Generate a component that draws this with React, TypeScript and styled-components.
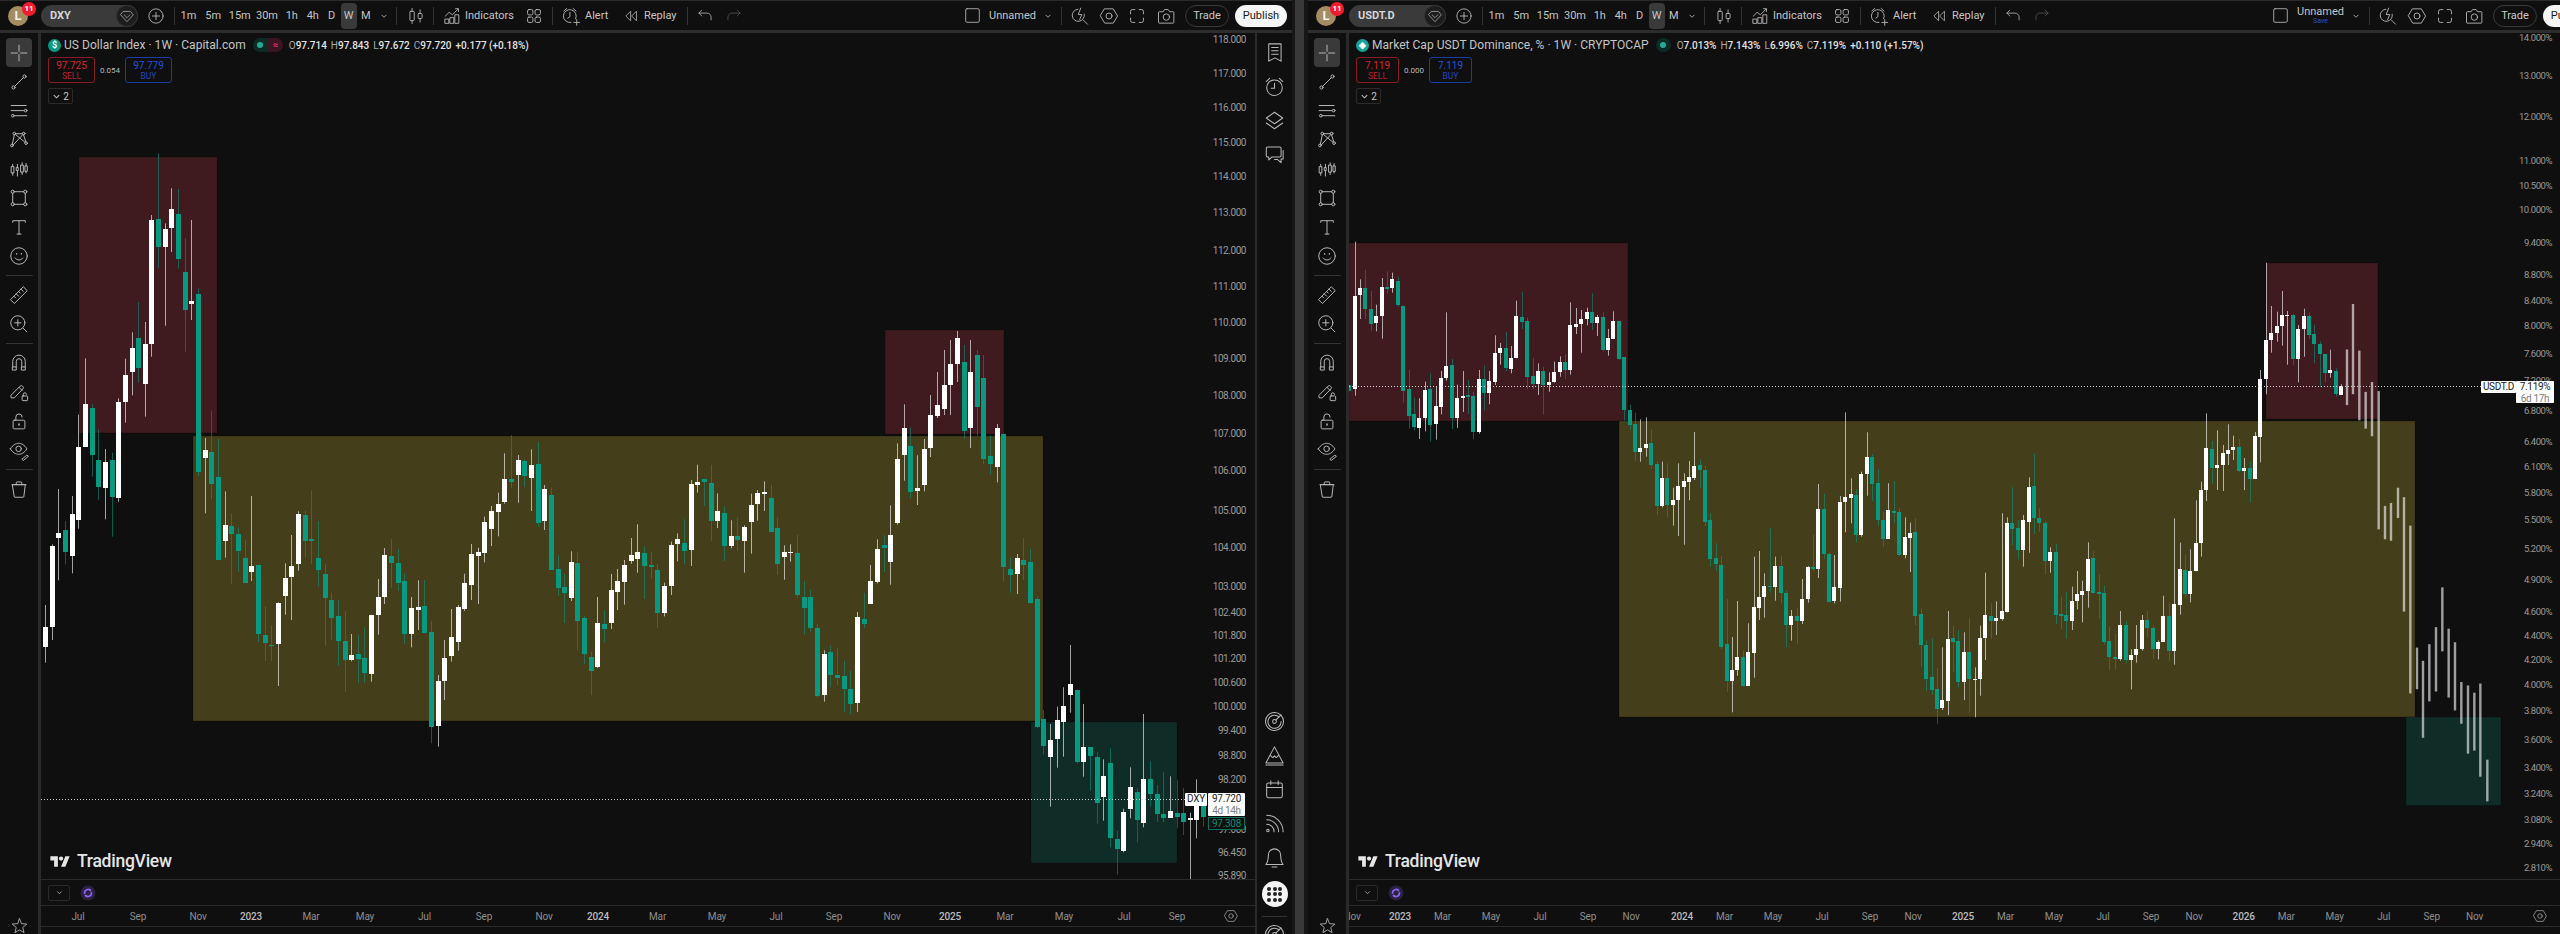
import React from "react";
import styled, { createGlobalStyle } from "styled-components";

const FONT = `Roboto, "Liberation Sans", Arial, sans-serif`;
const BG = "#0f0f0f";
const LINE = "#2a2a2a";

type C = { up: boolean; h: number; o: number; c: number; l: number };
const rows = (base: number, scale: number, s: string): C[] =>
  s.trim().split("\n").map((ln) => {
    const [t, a, b, c, d] = ln.trim().split(/\s+/);
    return { up: t === "u", h: base + +a / scale, o: base + +b / scale, c: base + +c / scale, l: base + +d / scale };
  });

const leftCandles: C[] = [
  ...rows(400, 3, `u 615 682 740 788
u 433 438 680 720
u 267 398 413 541
d 363 391 456 493
u 288 343 468 520
u 44 140 360 386`),
  ...rows(120, 3, `u 715 853 981 981
d 853 863 1005 1070
d 928 1021 1100 1140
u 987 1025 1105 1198
d 998 1021 1131 1250
u 835 845 1133 1145
u 716 765 846 908
u 637 683 757 826
d 547 655 745 788
u 606 671 791 890
u 285 300 672 710
d 100 296 380 443
u 310 326 382 617
u 205 268 323 396
d 207 283 418 446
d 355 457 570 695
u 300 543 551 600
d 505 522 1056 1068`),
  ...rows(400, 3, `u 114 151 173 340
d 32 156 253 298
d 117 232 479 479
u 274 375 424 473
d 340 377 403 551
d 382 403 452 515
d 420 474 548 548
u 288 498 516 543
d 496 496 703 726
d 619 706 728 783
d 676 734 738 783
u 607 608 733 858
u 490 533 589 644
u 405 497 532 660
u 334 343 492 512
d 332 346 424 474
d 272 418 422 493
d 363 474 509 558
d 492 522 593 737
d 578 599 653 720
d 599 648 723 797
d 633 723 781 877
u 702 766 779 784
d 704 762 776 850
d 682 773 818 848
u 644 645 822 845
u 537 590 646 704
u 444 465 591 612
d 417 467 490 563
d 447 490 550 573
d 521 542 701 731
u 591 625 701 742
u 541 622 631 690
d 540 618 700 700
d 663 695 980 1030
u 825 842 977 1040
u 720 773 843 900
u 627 712 767 785
u 615 622 726 752
u 521 549 628 632
u 432 462 555 600
u 443 455 468 612
u 350 366 459 487
u 318 334 388 438
u 278 311 335 409
u 160 236 306 311
d 105 238 246 263
u 165 179 224 308
d 178 183 228 262
u 148 195 235 333
d 126 193 368 380
u 255 268 363 390
d 263 286 510 510
d 466 506 564 587
d 521 562 580 669
u 454 487 594 603
d 457 490 664 751
d 648 654 763 792
d 755 771 813 886
u 591 670 801 804
d 630 672 686 726
u 522 569 669 687
u 507 544 575 630
u 480 494 545 614
u 414 464 482 491
u 373 455 477 518
d 438 460 497 597
d 455 494 502 535
d 493 511 639 685
u 548 558 639 649
u 425 435 557 585
u 400 418 433 484
d 358 430 452 493
u 240 252 449 498
u 194 247 254 278
d 237 238 246 318
d 194 250 362 423
u 280 332 362 384
d 318 339 438 483
u 361 407 439 445
d 354 409 420 453
u 376 380 422 518
u 281 316 365 461
u 270 280 312 362
u 244 277 281 333
d 254 295 395 396
d 354 385 491 525
u 436 455 470 539
u 433 457 458 485
d 405 460 586 594
d 543 592 623 703
d 570 590 683 695
d 672 684 888 892
u 751 761 886 905
d 737 757 824 862
d 743 825 834 856
d 782 828 866 937
d 813 867 911 942
u 636 652 909 936
d 578 657 671 685
u 495 544 612 612
u 418 448 546 550
d 406 434 443 516
u 316 405 486 554
u 130 177 370 374
u 13 85 165 242
d 82 138 275 294
u 166 265 274 315
u 117 147 255 274`),
  ...rows(0, 1, `u 395 415 448 457
u 372 405 416 418
u 350 385 409 415
u 340 364 385 415
u 331 338 364 382
d 345 362 431 439
u 340 372 428 448
d 350 355 407 436
d 355 378 459 464`),
  ...rows(400, 3, `d 106 167 192 222
u 72 85 202 247
d 100 103 500 545
d 473 508 525 578
u 462 474 521 582
d 414 481 494 540
d 446 485 610 610
d 590 598 982 985`),
  ...rows(640, 3, `d 210 238 319 343
u 252 300 352 500
u 200 240 298 383
u 142 198 246 350
u 15 132 166 218
d 148 149 365 370
u 192 320 365 410
d 322 322 349 452
d 335 351 488 552
u 358 407 472 542
d 325 370 593 622
d 572 598 626 703
u 506 516 633 637
u 382 441 507 535
d 445 455 541 607
u 222 416 550 562
d 364 416 461 500
d 435 462 522 546
d 396 521 535 547
u 409 512 534 534
d 420 519 532 565
d 444 520 545 585
u 518 535 541 718
u 418 460 539 595
d 480 497 530 560`),
];

const rightCandles: C[] = [
  ...rows(230, 3, `d 464 465 482 482
u 35 197 478 497
u 148 175 196 267
d 120 175 236 267
d 183 236 281 302
u 224 259 280 304
u 144 172 257 326
d 124 171 176 190
u 128 147 173 188
d 140 152 226 230
d 226 227 482 518
d 420 478 557 596
d 503 553 591 601
u 505 563 594 627
u 455 480 564 604
d 430 478 584 635
u 470 529 582 629
u 423 444 532 553
u 247 409 445 452
d 387 405 564 597
u 464 503 564 594
u 423 498 505 546
d 450 496 502 552
d 485 498 607 628
u 420 448 607 611
d 407 446 488 542
u 423 453 488 523
u 316 368 455 465
u 339 354 370 404
d 306 355 413 423
u 348 385 416 430
u 212 259 385 385
d 187 261 275 297
d 262 272 440 478
d 384 439 462 478
u 400 423 462 495
d 410 423 465 553
u 427 456 465 485
u 395 426 455 458
u 379 396 427 440
d 373 396 420 448
u 217 286 420 434
u 234 281 291 312
u 240 266 283 368
u 233 247 267 286
d 190 247 278 300
u 255 261 278 318
d 247 261 359 364
u 297 325 359 377
u 244 272 326 326
d 272 273 386 390
d 382 382 540 572
d 524 540 585 600
d 548 583 666 693
u 568 654 665 695
u 562 643 655 680
d 599 640 705 716
d 694 702 827 855
u 695 745 827 832
d 700 745 825 863
u 773 810 825 887
u 700 769 811 918
u 730 752 770 944
u 693 741 755 811
u 606 707 743 750
d 688 706 720 775
d 707 721 875 888
d 850 871 987 1010
d 940 985 1003 1023
d 977 1004 1250 1258
d 1107 1243 1352 1385
u 1221 1319 1352 1447
u 1113 1280 1321 1337
d 1261 1281 1368 1370
u 1180 1266 1367 1367
u 980 1132 1268 1343
u 963 1100 1133 1170
u 1030 1068 1101 1163
d 895 1068 1072 1088
u 980 1008 1072 1112
d 978 1008 1090 1120
d 1082 1088 1184 1252
u 1140 1159 1184 1232
d 1133 1159 1173 1241
u 1047 1107 1172 1182
u 1008 1011 1107 1118
d 915 1012 1018 1024
u 762 837 1017 1044
d 792 837 973 988
d 968 972 1115 1118
u 975 1072 1113 1120
u 798 817 1073 1115
u 547 800 815 907
u 745 793 804 880
d 778 795 915 937
u 725 732 914 920
u 607 682 733 797
d 673 682 761 813
d 718 760 870 888
d 846 869 926 950
u 760 841 926 926
d 753 842 848 880
d 835 846 975 978
u 862 922 974 985
u 878 908 923 1026
d 865 907 1157 1185
d 1136 1153 1245 1310
d 1232 1244 1347 1383
d 1225 1342 1380 1395
d 1315 1377 1437 1482
u 1252 1411 1435 1440
u 1143 1226 1412 1455
d 1187 1225 1237 1325
d 1200 1234 1357 1372
u 1207 1267 1357 1410
d 1164 1267 1348 1447
u 1312 1347 1349 1462
u 1187 1224 1348 1397
u 1028 1155 1225 1290
d 1120 1157 1173 1226
u 1114 1163 1172 1215
u 850 1143 1168 1172
u 862 878 1147 1147
d 772 879 896 945
d 870 894 960 988
u 855 871 960 1010
u 742 771 875 968
d 672 769 863 911
d 835 865 880 905
d 873 880 994 1033
u 952 965 992 1028
d 942 965 1155 1182
d 1100 1153 1158 1197
d 1087 1155 1172 1227
u 1070 1112 1172 1200
u 1023 1093 1113 1138
u 1052 1082 1094 1177
u 937 986 1083 1133
d 963 984 1088 1090
d 1033 1087 1092 1165
d 1067 1090 1235 1243
d 1190 1233 1282 1320
d 1210 1281 1286 1320
u 1143 1185 1286 1292
d 1173 1186 1290 1300
u 1258 1274 1290 1378
u 1185 1256 1274 1298
u 1155 1171 1256 1262
d 1143 1171 1194 1222
d 1187 1195 1256 1286
u 1232 1235 1256 1288
u 1097 1157 1236 1236
d 1117 1158 1262 1294
u 865 1123 1263 1304
u 938 1016 1124 1154
d 972 1020 1092 1102
u 958 1022 1092 1117
u 811 938 1022 1024
u 755 781 938 980
u 550 655 781 813
d 633 657 715 761
u 601 705 715 780
u 645 670 705 783
u 583 659 671 705
u 617 650 660 690
d 627 650 723 727
u 684 713 722 780
d 696 714 747 818
u 606 618 747 747
u 420 447 621 697
u 98 330 447 493
u 228 310 331 368
u 245 287 310 335
u 183 255 287 347
u 243 255 258 404
d 252 254 388 406
u 285 298 388 457
u 236 259 296 380
d 248 259 315 327
d 284 312 342 400
d 334 342 371 472
d 372 372 429 457
u 359 421 429 443
d 415 422 493 500`),
  ...rows(340, 2.64, `u 117 122 145 145`),
];

// projected bars on the right chart: [x in zoom, top, bottom]
const ghost: [number, number, number][] = [
  [441, 25, 172], [459, -95, 143], [478, 28, 212], [497, 137, 234], [516, 111, 254], [536, 135, 500],
  [555, 438, 526], [573, 430, 530], [594, 390, 470], [612, 415, 717], [631, 490, 933], [651, 812, 922],
  [669, 847, 1050], [688, 803, 954], [708, 758, 928], [727, 653, 822], [746, 762, 944], [765, 798, 978],
  [784, 903, 1013], [804, 912, 1092], [823, 931, 1084], [841, 907, 1153], [862, 1108, 1218],
];

type Zone = { x: number; y: number; x2: number; y2: number; fill: string };
const RED = "#3f1a1f", OLIVE = "#453e1b", TEAL = "#102c27";

const GlobalStyle = createGlobalStyle`
  html, body { margin: 0; padding: 0; background: ${BG}; overflow: hidden; }
  body { font-family: ${FONT}; }
  #root { width: 2560px; height: 934px; }
`;

const Page = styled.div`
  display: flex;
  width: 2560px;
  height: 934px;
  background: ${BG};
  color: #c8c8c8;
  font-family: ${FONT};
`;
const Pane = styled.section<{ $w: number }>`
  display: flex;
  flex-direction: column;
  width: ${(p) => p.$w}px;
  height: 100%;
  overflow: hidden;
  flex: none;
`;
const Gutter = styled.div`
  width: 16px;
  flex: none;
  background: #393939;
  border-left: 3px solid #171717;
  border-right: 4px solid #171717;
  box-sizing: border-box;
`;
const TopBar = styled.header`
  display: flex;
  align-items: center;
  width: 1292px;
  height: 30px;
  flex: none;
  box-sizing: border-box;
  border-top: 1px solid ${LINE};
  padding-right: 5px;
  background: ${BG};
`;
const Band = styled.div`
  height: 3px;
  flex: none;
  background: #2d2d2d;
`;
const Body = styled.div`
  display: flex;
  flex: 1;
  min-height: 0;
`;
const Avatar = styled.div`
  position: relative;
  width: 20px;
  height: 20px;
  margin-left: 8px;
  flex: none;
  border-radius: 50%;
  background: #a58c63;
  color: #f4f1ea;
  font-size: 13px;
  font-weight: 700;
  display: flex;
  align-items: center;
  justify-content: center;
`;
const Badge = styled.span`
  position: absolute;
  top: -4px;
  right: -8px;
  width: 14px;
  height: 14px;
  border-radius: 50%;
  background: #f01c2d;
  color: #fff;
  font-size: 8px;
  font-weight: 700;
  display: flex;
  align-items: center;
  justify-content: center;
`;
const SymbolPill = styled.div`
  display: flex;
  align-items: center;
  justify-content: space-between;
  width: 97px;
  height: 22px;
  margin-left: 13px;
  flex: none;
  border-radius: 11px;
  background: #3a3a3a;
  font-size: 11px;
  font-weight: 700;
  color: #d6d6d6;
  padding-left: 9px;
  box-sizing: border-box;
`;
const PillIcon = styled.span`
  width: 22px;
  height: 22px;
  border-radius: 50%;
  background: #1d1d1d;
  border: 1px solid #333;
  box-sizing: border-box;
  display: flex;
  align-items: center;
  justify-content: center;
`;
const IconBox = styled.span<{ $ml?: number; $w?: number }>`
  display: inline-flex;
  align-items: center;
  justify-content: center;
  width: ${(p) => p.$w ?? 20}px;
  height: 20px;
  margin-left: ${(p) => p.$ml ?? 0}px;
  flex: none;
`;
const VLine = styled.span<{ $ml: number }>`
  width: 1px;
  height: 18px;
  margin-left: ${(p) => p.$ml}px;
  background: #333;
  flex: none;
`;
const Interval = styled.span<{ $w: number; $on?: boolean }>`
  position: relative;
  width: ${(p) => p.$w}px;
  height: 26px;
  flex: none;
  display: flex;
  align-items: center;
  justify-content: center;
  font-size: 11px;
  color: #c4c4c4;
  border-radius: 4px;
  background: ${(p) => (p.$on ? "#3a3a3a" : "transparent")};
`;
const BarText = styled.span<{ $ml: number; $w: number }>`
  width: ${(p) => p.$w}px;
  margin-left: ${(p) => p.$ml}px;
  font-size: 11px;
  color: #c4c4c4;
  white-space: nowrap;
  flex: none;
`;
const Spacer = styled.span`
  flex: 1;
`;
const LayoutName = styled.span`
  width: 45px;
  margin-left: 8px;
  flex: none;
  display: flex;
  flex-direction: column;
  align-items: center;
  font-size: 11px;
  line-height: 11px;
  color: #c4c4c4;
  & > small {
    font-size: 7px;
    line-height: 8px;
    color: #2a4fd8;
  }
`;
const TradeButton = styled.span`
  width: 44px;
  height: 22px;
  margin-left: 9px;
  flex: none;
  box-sizing: border-box;
  border: 1px solid #3a3a3a;
  border-radius: 11px;
  display: flex;
  align-items: center;
  justify-content: center;
  font-size: 11px;
  color: #c8c8c8;
`;
const PublishButton = styled.span`
  width: 52px;
  height: 22px;
  margin-left: 6px;
  flex: none;
  border-radius: 11px;
  background: #f5f5f5;
  color: #1a1a1a;
  display: flex;
  align-items: center;
  justify-content: center;
  font-size: 11px;
`;
const LeftTools = styled.nav`
  width: 41px;
  flex: none;
  box-sizing: border-box;
  border-right: 3px solid ${LINE};
  padding-top: 5px;
  display: flex;
  flex-direction: column;
  align-items: center;
`;
const Tool = styled.span<{ $on?: boolean }>`
  width: 26px;
  height: 29px;
  flex: none;
  display: flex;
  align-items: center;
  justify-content: center;
  border-radius: 4px;
  background: ${(p) => (p.$on ? "#3a3a3a" : "transparent")};
`;
const ToolRule = styled.span`
  width: 27px;
  height: 1px;
  margin: 4.5px 0 4.5px;
  background: #333;
  flex: none;
`;
const BottomTool = styled.span`
  margin-top: auto;
  margin-bottom: -1px;
  height: 20px;
  display: flex;
  align-items: center;
`;
const Main = styled.main`
  flex: 1;
  min-width: 0;
  display: grid;
  grid-template-rows: 846px 26px 22px 1fr;
`;
const ChartArea = styled.div`
  position: relative;
  overflow: hidden;
`;
const ChartSvg = styled.svg`
  position: absolute;
  inset: 0;
  display: block;
`;
const Legend = styled.div`
  position: absolute;
  left: 7px;
  top: 5px;
  display: flex;
  flex-direction: column;
  align-items: flex-start;
`;
const LegendRow = styled.div`
  display: flex;
  align-items: center;
  height: 14px;
  white-space: nowrap;
`;
const SymbolLogo = styled.span<{ $bg: string }>`
  width: 13px;
  height: 13px;
  border-radius: 50%;
  background: ${(p) => p.$bg};
  color: #fff;
  display: flex;
  align-items: center;
  justify-content: center;
  font-size: 9px;
  font-weight: 700;
  flex: none;
`;
const LegendTitle = styled.span`
  margin-left: 3px;
  font-size: 12px;
  letter-spacing: 0.03px;
  color: #c4c4c4;
`;
const StatusPill = styled.span`
  margin-left: 7px;
  height: 14px;
  display: flex;
  border-radius: 7px;
  overflow: hidden;
  flex: none;
`;
const StatusCell = styled.span<{ $bg: string; $fg: string }>`
  width: 15px;
  display: flex;
  align-items: center;
  justify-content: center;
  background: ${(p) => p.$bg};
  color: ${(p) => p.$fg};
  font-size: 9px;
  font-weight: 700;
  & > i {
    width: 6px;
    height: 6px;
    border-radius: 50%;
    background: #22ab94;
  }
`;
const Ohlc = styled.span`
  margin-left: 6px;
  font-size: 10px;
  color: #aaa;
  display: flex;
  gap: 4px;
  & > span > b {
    font-weight: 500;
    color: #e2e2e2;
  }
`;
const TradeRow = styled.div`
  display: flex;
  align-items: center;
  margin-top: 5px;
`;
const TradeBox = styled.div<{ $c: string; $b: string; $w: number }>`
  width: ${(p) => p.$w}px;
  height: 26px;
  box-sizing: border-box;
  border: 1px solid ${(p) => p.$b};
  border-radius: 3px;
  color: ${(p) => p.$c};
  display: flex;
  flex-direction: column;
  align-items: center;
  justify-content: center;
  font-size: 10px;
  line-height: 11px;
  & > small {
    font-size: 8.5px;
    line-height: 10px;
    opacity: 0.85;
  }
`;
const Spread = styled.span`
  width: 30px;
  text-align: center;
  font-size: 8px;
  color: #b8b8b8;
`;
const Collapse = styled.div`
  margin-top: 5px;
  width: 25px;
  height: 16px;
  box-sizing: border-box;
  border: 1px solid #2a2a2a;
  border-radius: 2px;
  display: flex;
  align-items: center;
  justify-content: center;
  gap: 2px;
  font-size: 10px;
  color: #c8c8c8;
`;
const Watermark = styled.div`
  position: absolute;
  left: 8px;
  top: 818px;
  display: flex;
  align-items: center;
  gap: 6px;
  font-size: 17.5px;
  font-weight: 500;
  letter-spacing: -0.25px;
  color: #e6e6e6;
`;
const PriceAxis = styled.div`
  position: absolute;
  top: 0;
  bottom: 0;
  right: 0;
  width: 60px;
`;
const PriceTick = styled.span<{ $pr: number; $fs: number }>`
  position: absolute;
  right: ${(p) => p.$pr}px;
  transform: translateY(-50%);
  font-size: ${(p) => p.$fs}px;
  letter-spacing: -0.45px;
  color: #9a9a9a;
  white-space: nowrap;
`;
const TagBox = styled.div<{ $w: number }>`
  position: absolute;
  width: ${(p) => p.$w}px;
  box-sizing: border-box;
  background: #fff;
  border-radius: 1px;
  color: #222;
  font-size: 10px;
  letter-spacing: -0.3px;
  line-height: 12px;
  text-align: center;
  & > small {
    display: block;
    font-size: 10px;
    line-height: 11px;
    color: #7e7e7e;
  }
`;
const LastPriceBox = styled.div`
  position: absolute;
  width: 37px;
  height: 13px;
  box-sizing: border-box;
  background: ${BG};
  border: 1px solid #0b6e5d;
  color: #0d8a74;
  font-size: 10px;
  letter-spacing: -0.3px;
  line-height: 11px;
  text-align: center;
`;
const BottomRow = styled.div`
  display: flex;
  align-items: center;
  padding-left: 7px;
  border-top: 1px solid ${LINE};
`;
const SmallBtn = styled.span`
  width: 22px;
  height: 16px;
  box-sizing: border-box;
  border: 1px solid #2a2a2a;
  border-radius: 2px;
  display: flex;
  align-items: center;
  justify-content: center;
`;
const TimeAxis = styled.div`
  position: relative;
  overflow: hidden;
  border-top: 1px solid ${LINE};
  border-bottom: 1px solid ${LINE};
`;
const TimeTick = styled.span<{ $year: boolean }>`
  position: absolute;
  top: 50%;
  transform: translate(-50%, -50%);
  font-size: 10px;
  letter-spacing: -0.15px;
  font-weight: ${(p) => (p.$year ? 500 : 400)};
  color: ${(p) => (p.$year ? "#bdbdbd" : "#909090")};
`;
const AxisGear = styled.span`
  position: absolute;
  top: 50%;
  transform: translate(-50%, -50%);
  display: flex;
`;
const AxisFoot = styled.div``;
const RightTools = styled.aside`
  width: 37px;
  flex: none;
  box-sizing: border-box;
  border-left: 2px solid ${LINE};
  display: flex;
  flex-direction: column;
  align-items: center;
  padding-top: 2px;
  overflow: hidden;
`;
const SideTool = styled.span`
  width: 30px;
  height: 34px;
  flex: none;
  display: flex;
  align-items: center;
  justify-content: center;
`;
const SideGap = styled.span`
  height: 533px;
  flex: none;
`;
const AppsButton = styled.span`
  width: 26px;
  height: 26px;
  margin-top: 7px;
  flex: none;
  border-radius: 50%;
  background: #f5f5f5;
  display: grid;
  grid-template-columns: repeat(3, 4px);
  grid-auto-rows: 4px;
  gap: 1.5px;
  align-content: center;
  justify-content: center;
  & > i {
    background: #222;
    border-radius: 50%;
  }
`;
const SideRule = styled.span`
  width: 25px;
  height: 1px;
  margin-top: 9px;
  background: #333;
  flex: none;
`;
const SvgIcon = styled.svg<{ $dim?: boolean }>`
  display: block;
  fill: none;
  stroke: ${(p) => (p.$dim ? "#555" : "#b9b9b9")};
  stroke-width: 1.25;
  stroke-linecap: round;
  stroke-linejoin: round;
`;
const LoaderSvg = styled.svg`
  display: block;
  margin-left: 10px;
`;

const ICONS: Record<string, React.ReactNode> = {
  crosshair: <path d="M14 4v8M14 16v8M4 14h8M16 14h8" />,
  trend: (<><path d="M8.5 19.5 19.5 8.5" /><circle cx="7" cy="21" r="2" /><circle cx="21" cy="7" r="2" /></>),
  fib: (<><path d="M4 7h19M4 13.5h16M8.5 20H24" /><circle cx="22.5" cy="13.5" r="1.7" /><circle cx="6.2" cy="20" r="1.7" /></>),
  xabcd: (<><path d="M8 7.5 5.5 19.5M9.5 7 21.5 16.8M18.5 7.5 7 20M19.8 7.5 22.5 16" /><path d="M10 6h8" /><circle cx="8" cy="5.8" r="1.7" /><circle cx="20" cy="5.8" r="1.7" /><circle cx="5" cy="21" r="1.7" /><circle cx="23" cy="18" r="1.7" /></>),
  brush: (<><rect x="4.5" y="11" width="3" height="8" /><path d="M6 8v3M6 19v3" /><rect x="11" y="12" width="2" height="4" /><path d="M12 8v4M12 16v7" /><rect x="16.5" y="9" width="3" height="9" /><path d="M18 6v3M18 18v3" /><rect x="22" y="10" width="2.5" height="7" /><path d="M23 7v3M23 17v2" /></>),
  rect: (<><path d="M8 6h12M8 22h12M6 8v12M22 8v12" /><circle cx="6" cy="6" r="2" /><circle cx="22" cy="6" r="2" /><circle cx="6" cy="22" r="2" /><circle cx="22" cy="22" r="2" /></>),
  text: <path d="M6 8V6h16v2M14 6v17M11.5 23h5" />,
  smile: (<><circle cx="14" cy="14" r="10.5" /><path d="M9 16.5c2.5 3.5 7.5 3.5 10 0" /><path d="M11 11v.6M17 11v.6" strokeWidth="1.7" /></>),
  ruler: <path d="M3.5 19.5 19.5 3.5l5 5-16 16zM7.5 15.5l2 2M10.5 12.5l3 3M13.5 9.5l2 2M16.5 6.5l3 3" />,
  zoomin: (<><circle cx="12.5" cy="12.5" r="9" /><path d="M12.5 8.5v8M8.5 12.5h8M19.5 19.5l4.5 4.5" /></>),
  magnet: <path d="M6 19v-7a8 8 0 0 1 16 0v7M10.5 19v-7a3.5 3.5 0 0 1 7 0v7M6 19h4.5v4H6zM17.5 19H22v4h-4.5z" />,
  pencillock: (<><path d="M4 18 15.5 6.5a2 2 0 0 1 2.8 0l.7.7a2 2 0 0 1 0 2.8L8 21.5H4.5zM14 8l4 4" /><rect x="18" y="19" width="7" height="6" rx="1" /><path d="M19.5 19v-2a2 2 0 0 1 4 0" /></>),
  lock: (<><rect x="6.5" y="13" width="15" height="11" rx="1.5" /><path d="M10 13V9a4 4 0 0 1 8 0" /><path d="M14 18v1" strokeWidth="2" /></>),
  eye: (<><path d="M3 12.5C6 7.5 10 5.5 13.5 5.5s7.5 2 10.5 7c-3 5-7 7-10.5 7S6 17.5 3 12.5z" /><circle cx="13.5" cy="12.5" r="3.5" /><path d="M18 25.5l6-5 2 1.5-6 5z" /></>),
  trash: <path d="M6 8.5h16l-1.8 15a1 1 0 0 1-1 1H8.800a1 1 0 0 1-1-1zM5 8.5h18M10.5 8.5V6a1 1 0 0 1 1-1h5a1 1 0 0 1 1 1v2.500" />,
  star: <path d="M14 4l3 7.300 7.800.6-6 5 1.900 7.600L14 20.400 7.300 24.500l1.900-7.600-6-5 7.800-.6z" />,
  plus: (<><circle cx="14" cy="14" r="10" /><path d="M14 9v10M9 14h10" /></>),
  candle: (<><rect x="5.5" y="7.5" width="6" height="13" rx="1" /><path d="M8.5 3.5v4M8.5 20.5v4" /><rect x="17" y="10.5" width="5.5" height="7" rx="1" /><path d="M19.7 5.5v5M19.7 17.5v5" /></>),
  indicators: (<><path d="M4.5 15 10 9.5l4.5 3.500 8-8" /><path d="M19 4.5h4v4" /><rect x="4.5" y="19" width="5" height="6" /><rect x="11.5" y="17" width="5" height="8" /><rect x="18.5" y="13" width="5" height="12" /></>),
  grid: (<><rect x="5" y="5" width="7.5" height="7.5" rx="2" /><rect x="15.5" y="5" width="7.5" height="7.5" rx="2" /><rect x="5" y="15.5" width="7.5" height="7.5" rx="2" /><rect x="15.5" y="15.5" width="7.5" height="7.5" rx="2" /></>),
  alert: (<><path d="M20.5 18a9 9 0 1 0-6.500 5" /><path d="M12.5 9v6l-3 2M4 7l4-3.500M21 7l-4-3.500M22 19v8M18 23h8" /></>),
  replay: <path d="M13 7 6 14l7 7zM22 7l-7 7 7 7z" />,
  undo: <path d="M9 5 4.5 9.5 9 14M4.5 9.5H17a6.500 6.500 0 0 1 6.500 6.500v4" />,
  redo: <path d="M19 5l4.5 4.5L19 14M23.5 9.5H11a6.500 6.500 0 0 0-6.500 6.500v4" />,
  square: <rect x="4" y="4" width="20" height="20" rx="2" />,
  quick: (<><path d="M20 11.5a8.500 8.500 0 1 1-9-7M15 3l-3.500 9h5l-3 7" /><path d="M18.5 19.5l6 6" /></>),
  hex: (<><path d="M8 4h12l6 10-6 10H8L2 14z" /><circle cx="14" cy="14" r="4.2" /></>),
  full: <path d="M11 5H7.500A2.500 2.500 0 0 0 5 7.500V11M17 5h3.500A2.500 2.500 0 0 1 23 7.500V11M11 23H7.500A2.500 2.500 0 0 1 5 20.500V17M17 23h3.500a2.500 2.500 0 0 0 2.500-2.500V17" />,
  camera: (<><path d="M3.5 9a1 1 0 0 1 1-1H10l2-3h5l2 3h5a1 1 0 0 1 1 1v14a1 1 0 0 1-1 1H4.500a1 1 0 0 1-1-1z" /><circle cx="14.5" cy="15.5" r="4.5" /></>),
  diamond: (<><path d="M8 6h12l5 6-11 12L3 12z" /><path d="M9 12l5 5 5-5" /></>),
  chev: <path d="M9 12l5 5 5-5" strokeWidth="2" />,
  watch: <path d="M7 3.5h15v21l-7.500-4-7.500 4zM10.500 8h8M10.500 12h8M10.500 16h8" />,
  alarm: (<><circle cx="14" cy="15.5" r="9.5" /><path d="M14 10v6h-4M4 8l4-4M24 8l-4-4" /></>),
  layers: <path d="M14 4l10 7-10 7L4 11zM4 17l10 7 10-7" />,
  chat: <path d="M4 6.5A1.500 1.500 0 0 1 5.500 5h15A1.500 1.500 0 0 1 22 6.500v9a1.500 1.500 0 0 1-1.500 1.500H11l-4 3.500V17H5.500A1.500 1.500 0 0 1 4 15.500zM24.500 9v10.500H22V24l-4.500-4H14" />,
  radar: (<><circle cx="14" cy="14" r="11" /><path d="M19.5 8.5A8 8 0 1 0 22 14" /><circle cx="14" cy="14" r="2.3" /><path d="M15.6 12.4 22 6" /></>),
  mountain: <path d="M14 3.5 3.500 23h21zM3.500 25.500h21M8.500 13.500l3.500 3 2-2 2 2 3.500-3" />,
  calendar: (<><rect x="4.5" y="6" width="19" height="18" rx="2" /><path d="M4.5 11.5h19M9.500 3.500V8M18.500 3.500V8" /></>),
  rss: (<><circle cx="6" cy="22.5" r="1.5" /><path d="M4.5 15a9 9 0 0 1 9 9M4.500 9.500A14.500 14.500 0 0 1 19 24M4.500 4a20 20 0 0 1 20 20" /></>),
  bell: <path d="M14 3.5a7.500 7.500 0 0 1 7.500 7.500c0 6 .8 9 3 11.500h-21c2.200-2.500 3-5.500 3-11.500A7.500 7.500 0 0 1 14 3.500zM11 25.500h6" />,
};

const Icon = ({ n, s = 22, dim }: { n: string; s?: number; dim?: boolean }) => (
  <SvgIcon viewBox="0 0 28 28" width={s} height={s} $dim={dim}>
    {ICONS[n]}
  </SvgIcon>
);

const TvLogo = () => (
  <svg width="22" height="15" viewBox="0 0 36 28" fill="#e6e6e6">
    <path d="M14 24H7V12H0V4h14zM28 24h-8l8-20h8z" />
    <circle cx="20" cy="8.5" r="4" />
  </svg>
);

const Loader = () => (
  <LoaderSvg width="16" height="16" viewBox="0 0 16 16" fill="none">
    <circle cx="8" cy="8" r="7.5" fill="#2b2140" />
    <path d="M4.5 8a3.500 3.500 0 0 1 6-2.500M11.500 8a3.500 3.500 0 0 1-6 2.500" stroke="#8a63f0" strokeWidth="1.8" strokeLinecap="round" />
  </LoaderSvg>
);

const INTERVALS: [string, number][] = [
  ["1m", 24], ["5m", 25.5], ["15m", 27.5], ["30m", 27], ["1h", 22.5], ["4h", 19.5], ["D", 18], ["W", 16.5], ["M", 17.5],
];

type Config = {
  symbol: string;
  saved?: boolean;
  left: number;
  candles: C[];
  step: number;
  x0: number;
  bodyW: number;
  zones: Zone[];
  crossY: number;
  crossTo: number;
  logo: React.ReactNode;
  logoBg: string;
  title: string;
  status2?: boolean;
  ohlc: [string, string][];
  change: string;
  sell: string;
  buy: string;
  spread: string;
  boxW: number;
  prices: [string, number][];
  priceRight: number;
  priceSize: number;
  times: [string, number][];
  gearX: number;
  right?: boolean;
};

const TopBarView = ({ c }: { c: Config }) => (
  <TopBar>
    <Avatar>L<Badge>11</Badge></Avatar>
    <SymbolPill>
      {c.symbol}
      <PillIcon><Icon n="diamond" s={16} /></PillIcon>
    </SymbolPill>
    <IconBox $ml={7.5}><Icon n="plus" /></IconBox>
    <VLine $ml={8} />
    <IconBox $w={2} />
    {INTERVALS.map(([t, w]) => (
      <Interval key={t} $w={w} $on={t === "W"}>{t}</Interval>
    ))}
    <IconBox $w={18}><Icon n="chev" s={12} /></IconBox>
    <VLine $ml={3} />
    <IconBox $ml={9}><Icon n="candle" /></IconBox>
    <VLine $ml={7.5} />
    <IconBox $ml={8}><Icon n="indicators" s={23} /></IconBox>
    <BarText $ml={3} $w={47}>Indicators</BarText>
    <IconBox $ml={12}><Icon n="grid" /></IconBox>
    <VLine $ml={8} />
    <IconBox $ml={8}><Icon n="alert" /></IconBox>
    <BarText $ml={4} $w={23}>Alert</BarText>
    <IconBox $ml={12.5}><Icon n="replay" s={18} /></IconBox>
    <BarText $ml={3.5} $w={31}>Replay</BarText>
    <VLine $ml={11.5} />
    <IconBox $ml={7.5}><Icon n="undo" s={18} /></IconBox>
    <IconBox $ml={9}><Icon n="redo" s={18} dim /></IconBox>
    <Spacer />
    <IconBox><Icon n="square" s={19} /></IconBox>
    <LayoutName>
      Unnamed
      {c.saved ? null : <small>Save</small>}
    </LayoutName>
    <IconBox $ml={7} $w={12}><Icon n="chev" s={12} /></IconBox>
    <VLine $ml={6.5} />
    <IconBox $ml={8.5}><Icon n="quick" /></IconBox>
    <IconBox $ml={9}><Icon n="hex" /></IconBox>
    <IconBox $ml={8}><Icon n="full" /></IconBox>
    <IconBox $ml={9}><Icon n="camera" /></IconBox>
    <TradeButton>Trade</TradeButton>
    <PublishButton>Publish</PublishButton>
  </TopBar>
);

const ToolsView = () => (
  <LeftTools>
    <Tool $on><Icon n="crosshair" /></Tool>
    {["trend", "fib", "xabcd", "brush", "rect", "text", "smile"].map((n) => <Tool key={n}><Icon n={n} /></Tool>)}
    <ToolRule />
    <Tool><Icon n="ruler" /></Tool>
    <Tool><Icon n="zoomin" /></Tool>
    <ToolRule />
    {["magnet", "pencillock", "lock", "eye"].map((n) => <Tool key={n}><Icon n={n} /></Tool>)}
    <ToolRule />
    <Tool><Icon n="trash" /></Tool>
    <BottomTool><Icon n="star" s={19} /></BottomTool>
  </LeftTools>
);

const CandleSvg = ({ c }: { c: Config }) => {
  const w = c.right ? 1211 : 1214;
  return (
    <ChartSvg width={w} height={846} viewBox={`${c.left} 33 ${w} 846`}>
      {c.zones.map((z, i) => (
        <rect key={i} x={z.x} y={z.y} width={z.x2 - z.x} height={z.y2 - z.y} fill={z.fill} stroke="rgba(0,0,0,.22)" />
      ))}
      {c.candles.map((k, i) => {
        const x = Math.round(c.x0 + c.step * i);
        const col = k.up ? "#ffffff" : "#089981";
        const top = Math.round(k.o);
        const h = Math.max(1, Math.round(k.c) - top);
        return (
          <g key={i}>
            <rect x={x} y={k.h} width={1} height={Math.max(0, k.l - k.h)} fill={col} opacity={k.up ? 0.62 : 0.55} />
            <rect x={x - Math.floor(c.bodyW / 2)} y={top} width={c.bodyW} height={h} fill={col} />
          </g>
        );
      })}
      {c.right && ghost.map(([x, a, b], i) => (
        <rect key={i} x={2200 + x / 3 - 1.2} y={340 + a / 2.64} width={2.4} height={(b - a) / 2.64} fill="#fff" opacity={0.6} />
      ))}
      <line x1={c.left} x2={c.crossTo} y1={c.crossY} y2={c.crossY} stroke="#cfcfcf" strokeWidth={1} strokeDasharray="1 2" />
    </ChartSvg>
  );
};

const ChartView = ({ c }: { c: Config }) => (
  <ChartArea>
    <CandleSvg c={c} />
    <Legend>
      <LegendRow>
        <SymbolLogo $bg={c.logoBg}>{c.logo}</SymbolLogo>
        <LegendTitle>{c.title}</LegendTitle>
        <StatusPill>
          <StatusCell $bg="#0d2b26" $fg="#22ab94"><i /></StatusCell>
          {c.status2 ? <StatusCell $bg="#3a1420" $fg="#f23670">≈</StatusCell> : null}
        </StatusPill>
        <Ohlc>
          {c.ohlc.map(([k, v]) => <span key={k}>{k}<b>{v}</b></span>)}
          <span><b>{c.change}</b></span>
        </Ohlc>
      </LegendRow>
      <TradeRow>
        <TradeBox $c="#d8232f" $b="#8a1b26" $w={c.boxW}>{c.sell}<small>SELL</small></TradeBox>
        <Spread>{c.spread}</Spread>
        <TradeBox $c="#2a50dc" $b="#1c3c9e" $w={c.boxW}>{c.buy}<small>BUY</small></TradeBox>
      </TradeRow>
      <Collapse>
        <svg width="9" height="9" viewBox="0 0 10 10" fill="none"><path d="M2 3.500l3 3 3-3" stroke="#bbb" strokeWidth="1.2" /></svg>
        2
      </Collapse>
    </Legend>
    <Watermark><TvLogo />TradingView</Watermark>
    <PriceAxis>
      {c.prices.map(([t, y]) => (
        <PriceTick key={t} $pr={c.priceRight} $fs={c.priceSize} style={{ top: y - 33 }}>{t}</PriceTick>
      ))}
    </PriceAxis>
    {c.right ? (
      <>
        <TagBox $w={35} style={{ left: 2481 - c.left, top: 381 - 33, height: 12 }}>USDT.D</TagBox>
        <TagBox $w={38} style={{ left: 2516 - c.left, top: 381 - 33, height: 22 }}>7.119%<small>6d 17h</small></TagBox>
      </>
    ) : (
      <>
        <TagBox $w={22} style={{ left: 1185 - c.left, top: 793 - 33, height: 13 }}>DXY</TagBox>
        <TagBox $w={37} style={{ left: 1208 - c.left, top: 793 - 33, height: 23 }}>97.720<small>4d 14h</small></TagBox>
        <LastPriceBox style={{ left: 1208 - c.left, top: 817 - 33 }}>97.308</LastPriceBox>
      </>
    )}
  </ChartArea>
);

const leftTimes: [string, number][] = [
  ["Jul", 78], ["Sep", 138], ["Nov", 198], ["2023", 251], ["Mar", 311], ["May", 365], ["Jul", 424.5], ["Sep", 484], ["Nov", 544],
  ["2024", 598], ["Mar", 657.6], ["May", 717], ["Jul", 776], ["Sep", 834], ["Nov", 892], ["2025", 950], ["Mar", 1005], ["May", 1064],
  ["Jul", 1124], ["Sep", 1177],
];
const rightTimes: [string, number][] = (() => {
  const out: [string, number][] = [["Nov", 1352]];
  ([["2023", 1400], ["2024", 1682], ["2025", 1963], ["2026", 2243.7]] as [string, number][]).forEach(([y, X]) => {
    out.push([y, X]);
    out.push(["Mar", X + 42.5], ["May", X + 91], ["Jul", X + 140], ["Sep", X + 188], ["Nov", X + 231]);
  });
  return out;
})();

const LEFT: Config = {
  symbol: "DXY",
  saved: true,
  left: 41,
  candles: leftCandles,
  step: 6.656,
  x0: 45,
  bodyW: 5,
  zones: [
    { x: 79, y: 157, x2: 217, y2: 433, fill: RED },
    { x: 885, y: 330, x2: 1004, y2: 434, fill: RED },
    { x: 193, y: 436, x2: 1043, y2: 721, fill: OLIVE },
    { x: 1031, y: 722, x2: 1177, y2: 863, fill: TEAL },
  ],
  crossY: 799.5,
  crossTo: 1186,
  logo: "$",
  logoBg: "#089981",
  title: "US Dollar Index · 1W · Capital.com",
  status2: true,
  ohlc: [["O", "97.714"], ["H", "97.843"], ["L", "97.672"], ["C", "97.720"]],
  change: "+0.177 (+0.18%)",
  sell: "97.725",
  buy: "97.779",
  spread: "0.054",
  boxW: 47,
  prices: [
    ["118.000", 38.7], ["117.000", 72.7], ["116.000", 107], ["115.000", 142], ["114.000", 176], ["113.000", 212], ["112.000", 250],
    ["111.000", 286], ["110.000", 322], ["109.000", 358], ["108.000", 395], ["107.000", 433], ["106.000", 470], ["105.000", 510],
    ["104.000", 547], ["103.000", 586], ["102.400", 612], ["101.800", 635], ["101.200", 657.7], ["100.600", 682], ["100.000", 706],
    ["99.400", 730], ["98.800", 755], ["98.200", 779], ["97.000", 829], ["96.450", 852], ["95.890", 875],
  ],
  priceRight: 9,
  priceSize: 10,
  times: leftTimes,
  gearX: 1231,
};

const RIGHT: Config = {
  symbol: "USDT.D",
  left: 1349,
  candles: rightCandles,
  step: 5.391,
  x0: 1349.3,
  bodyW: 4,
  right: true,
  zones: [
    { x: 1349, y: 243, x2: 1628, y2: 421, fill: RED },
    { x: 2266, y: 263, x2: 2378, y2: 419, fill: RED },
    { x: 1619, y: 421, x2: 2415, y2: 717, fill: OLIVE },
    { x: 2406, y: 717, x2: 2501, y2: 805.5, fill: TEAL },
  ],
  crossY: 386.5,
  crossTo: 2481,
  logo: "◈",
  logoBg: "#17a398",
  title: "Market Cap USDT Dominance, % · 1W · CRYPTOCAP",
  ohlc: [["O", "7.013%"], ["H", "7.143%"], ["L", "6.996%"], ["C", "7.119%"]],
  change: "+0.110 (+1.57%)",
  sell: "7.119",
  buy: "7.119",
  spread: "0.000",
  boxW: 43,
  prices: [
    ["14.000%", 37], ["13.000%", 75], ["12.000%", 116], ["11.000%", 160], ["10.500%", 185], ["10.000%", 209], ["9.400%", 242],
    ["8.800%", 274], ["8.400%", 300], ["8.000%", 325], ["7.600%", 352.5], ["7.200%", 380], ["6.800%", 409.7], ["6.400%", 440.8],
    ["6.100%", 465.8], ["5.800%", 491.5], ["5.500%", 519], ["5.200%", 548], ["4.900%", 579], ["4.600%", 611], ["4.400%", 634.7],
    ["4.200%", 658.6], ["4.000%", 683.6], ["3.800%", 710], ["3.600%", 738.5], ["3.400%", 767], ["3.240%", 792.6],
    ["3.080%", 819], ["2.940%", 843], ["2.810%", 866.5],
  ],
  priceRight: 8,
  priceSize: 9.5,
  times: rightTimes,
  gearX: 2539.7,
};

const PaneView = ({ c, width }: { c: Config; width: number }) => (
  <Pane $w={width}>
    <TopBarView c={c} />
    <Band />
    <Body>
      <ToolsView />
      <Main>
        <ChartView c={c} />
        <BottomRow>
          <SmallBtn><Icon n="chev" s={11} /></SmallBtn>
          <Loader />
        </BottomRow>
        <TimeAxis>
          {c.times.map(([t, x], i) => (
            <TimeTick key={i} $year={/^\d/.test(t)} style={{ left: x - c.left }}>{t}</TimeTick>
          ))}
          <AxisGear style={{ left: c.gearX - c.left }}><Icon n="hex" s={15} /></AxisGear>
        </TimeAxis>
        <AxisFoot />
      </Main>
      {c.right ? null : (
        <RightTools>
          {["watch", "alarm", "layers", "chat"].map((n) => <SideTool key={n}><Icon n={n} s={23} /></SideTool>)}
          <SideGap />
          {["radar", "mountain", "calendar", "rss", "bell"].map((n) => <SideTool key={n}><Icon n={n} s={23} /></SideTool>)}
          <AppsButton>{Array.from({ length: 9 }, (_, i) => <i key={i} />)}</AppsButton>
          <SideRule />
          <SideTool><Icon n="radar" s={23} /></SideTool>
        </RightTools>
      )}
    </Body>
  </Pane>
);

export default function App() {
  return (
    <>
      <GlobalStyle />
      <Page>
        <PaneView c={LEFT} width={1292} />
        <Gutter />
        <PaneView c={RIGHT} width={1252} />
      </Page>
    </>
  );
}
